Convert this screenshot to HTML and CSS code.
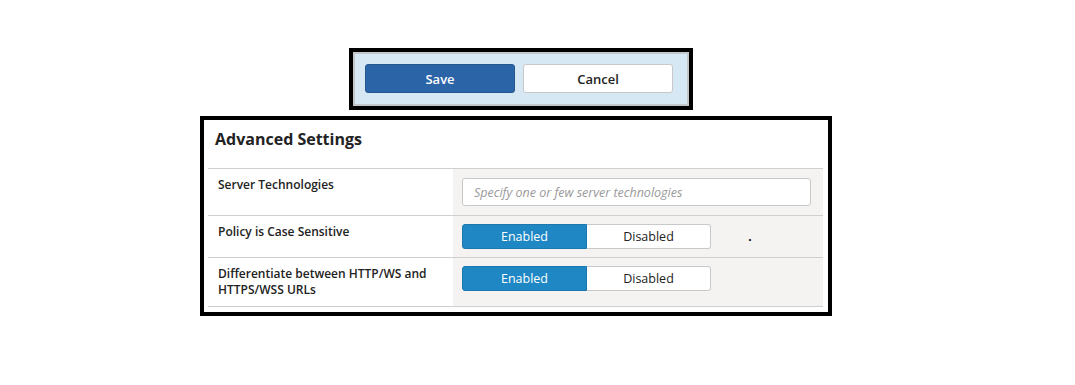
FILE: index.html
```html
<!DOCTYPE html>
<html lang="en">
<head>
  <meta charset="UTF-8" />
  <title>Advanced Settings</title>
  <link rel="stylesheet" href="styles.css">
</head>
<body>
  <div class="action-frame">
    <div class="action-bar">
      <button type="button" class="btn btn-save">Save</button>
      <button type="button" class="btn btn-cancel">Cancel</button>
    </div>
  </div>

  <div class="settings-frame">
    <h3 class="settings-title">Advanced Settings</h3>
    <table class="settings-table">
      <tr>
        <th>Server Technologies</th>
        <td class="input-cell">
          <input type="text" class="tech-input" placeholder="Specify one or few server technologies">
        </td>
      </tr>
      <tr>
        <th>Policy is Case Sensitive</th>
        <td>
          <div class="toggle">
            <span class="toggle-opt active">Enabled</span>
            <span class="toggle-opt">Disabled</span>
          </div>
          <span class="stray-dot">.</span>
        </td>
      </tr>
      <tr>
        <th>Differentiate between HTTP/WS and HTTPS/WSS URLs</th>
        <td>
          <div class="toggle">
            <span class="toggle-opt active">Enabled</span>
            <span class="toggle-opt">Disabled</span>
          </div>
        </td>
      </tr>
    </table>
  </div>
</body>
</html>
```

FILE: styles.css
```css
/* Save bar + advanced settings panel */
body {
  margin: 0;
  padding-top: 48px;
  font-family: 'Open Sans', 'DejaVu Sans', sans-serif;
  background: #fff;
  color: #222;
}

.action-frame {
  width: 336px;
  margin-left: 349px;
  border: 4px solid #000;
}

.action-bar {
  display: flex;
  gap: 8px;
  padding: 10px 14px 11px 10px;
  background: #d7e8f5;
  border: 2px solid #c4c7ca;
}

.btn {
  width: 150px;
  height: 29px;
  border-radius: 3px;
  font-family: inherit;
  font-size: 13px;
  font-weight: 600;
  cursor: pointer;
}

.btn-save {
  background: #2b64a7;
  border: 1px solid #24578f;
  color: #fff;
}

.btn-cancel {
  background: #fff;
  border: 1px solid #c8c8c8;
  color: #222;
}

.settings-frame {
  width: 624px;
  margin: 6px 0 0 200px;
  padding-bottom: 5px;
  border: 4px solid #000;
}

.settings-title {
  margin: 0;
  padding: 8px 11px 18px;
  font-size: 16px;
  line-height: 22px;
  font-weight: 700;
  color: #222;
}

.settings-table {
  width: 615px;
  margin-left: 4px;
  border-collapse: collapse;
}

.settings-table tr {
  border-top: 1px solid #cfcfcf;
  border-bottom: 1px solid #cfcfcf;
}

.settings-table th {
  width: 225px;
  padding: 8px 10px;
  font-size: 12px;
  line-height: 16px;
  font-weight: 600;
  text-align: left;
  vertical-align: top;
}

.settings-table td {
  padding: 8px 12px 8px 9px;
  background: #f4f3f2;
  vertical-align: top;
  white-space: nowrap;
}

.settings-table td.input-cell {
  padding-top: 9px;
  padding-bottom: 9px;
}

.tech-input {
  box-sizing: border-box;
  display: block;
  width: 349px;
  height: 28px;
  padding: 0 11px;
  border: 1px solid #c9c9c9;
  border-radius: 3px;
  background: #fff;
  font-family: inherit;
  font-size: 12.5px;
}

.tech-input::placeholder {
  color: #999;
  font-style: italic;
}

.toggle {
  display: inline-flex;
  vertical-align: top;
}

.toggle-opt {
  box-sizing: border-box;
  width: 124px;
  height: 25px;
  line-height: 23px;
  text-align: center;
  font-size: 12.5px;
  background: #fff;
  color: #222;
  border: 1px solid #c9c9c9;
  border-left: none;
  border-radius: 0 3px 3px 0;
}

.toggle-opt.active {
  width: 125px;
  background: #1e87c4;
  border: 1px solid #1a78ae;
  color: #fff;
  border-radius: 3px 0 0 3px;
}

.stray-dot {
  display: inline-block;
  margin-left: 33px;
  font-size: 12px;
  font-weight: 700;
  line-height: 21px;
  color: #000;
}
```
